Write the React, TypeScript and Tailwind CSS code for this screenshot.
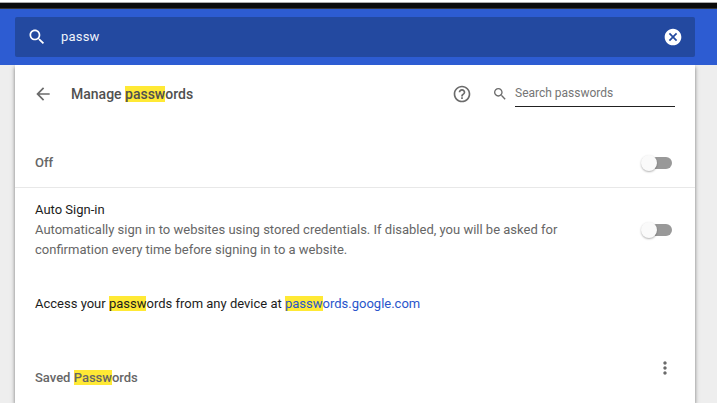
import type { ReactNode } from "react";

function Mark({ children }: { children: ReactNode }) {
  return <mark className="bg-[#ffe935] text-inherit">{children}</mark>;
}

function SearchIcon({ className }: { className: string }) {
  return (
    <svg viewBox="0 0 24 24" fill="currentColor" className={className}>
      <path d="M15.5 14h-.79l-.28-.27C15.41 12.59 16 11.11 16 9.5 16 5.91 13.09 3 9.5 3S3 5.91 3 9.5 5.91 16 9.5 16c1.61 0 3.09-.59 4.23-1.57l.27.28v.79l5 4.99L20.49 19l-4.99-5zm-6 0C7.01 14 5 11.99 5 9.5S7.01 5 9.5 5 14 7.01 14 9.5 11.99 14 9.5 14z" />
    </svg>
  );
}

function Toggle() {
  return (
    <button className="ml-auto mr-[23px] flex h-3 w-[30px] shrink-0 items-center rounded-full bg-[#999]" aria-label="Toggle">
      <span className="-ml-[1px] h-4 w-4 rounded-full bg-[#fafafa] shadow-[0_1px_2px_rgba(0,0,0,0.3)]" />
    </button>
  );
}

export default function App() {
  return (
    <div className="flex h-[403px] w-[717px] flex-col overflow-hidden bg-[#eeeeee] font-[Roboto,sans-serif] text-[13px] leading-5 text-[#1c1c1c]">
      <div className="h-[9px] shrink-0 border-t-2 border-b border-t-white border-b-[#353535] bg-[#0b0b0b]">
        <div className="h-px bg-[#aaa]" />
      </div>
      <header className="relative z-10 h-14 shrink-0 bg-[#2d5cd2] px-[15px] pt-2 pr-[22px]">
        <div className="flex h-10 items-center rounded-[2px] bg-[#2349a0] pl-3 pr-3 text-white">
          <SearchIcon className="h-5 w-5" />
          <span className="ml-[14px] tracking-[0.2px] text-[#f0f3fa]">passw</span>
          <svg viewBox="0 0 24 24" fill="currentColor" className="ml-auto h-5 w-5">
            <path d="M12 2C6.47 2 2 6.47 2 12s4.47 10 10 10 10-4.47 10-10S17.53 2 12 2zm5 13.59L15.59 17 12 13.41 8.41 17 7 15.59 10.59 12 7 8.41 8.41 7 12 10.59 15.59 7 17 8.41 13.41 12 17 15.59z" />
          </svg>
        </div>
      </header>
      <main className="ml-[15px] flex w-[680px] flex-1 flex-col bg-white shadow-[0_2px_4px_rgba(0,0,0,0.5)]">
        <div className="flex h-[58px] shrink-0 items-center pl-[18px] pr-5 text-[#6b6b6b]">
          <svg viewBox="0 0 24 24" fill="currentColor" className="h-5 w-5">
            <path d="M20 11H7.83l5.59-5.59L12 4l-8 8 8 8 1.41-1.41L7.83 13H20v-2z" />
          </svg>
          <h1 className="ml-[18px] text-sm font-medium text-[#505050]">
            Manage <Mark>passw</Mark>ords
          </h1>
          <svg viewBox="0 0 24 24" fill="currentColor" className="ml-auto h-5 w-5">
            <path d="M11 18h2v-2h-2v2zm1-16C6.48 2 2 6.48 2 12s4.48 10 10 10 10-4.48 10-10S17.52 2 12 2zm0 18c-4.41 0-8-3.59-8-8s3.59-8 8-8 8 3.59 8 8-3.59 8-8 8zm0-14c-2.21 0-4 1.79-4 4h2c0-1.1.9-2 2-2s2 .9 2 2c0 2-3 1.75-3 5h2c0-2.25 3-2.5 3-5 0-2.21-1.79-4-4-4z" />
          </svg>
          <SearchIcon className="ml-5 h-4 w-4" />
          <div className="ml-[7px] h-[25px] w-40 border-b border-[#212121] pt-[3px] text-xs text-[#757575]">Search passwords</div>
        </div>
        <div className="mt-4 flex h-[49px] shrink-0 items-center border-b border-[#e8e8e8] pl-5">
          <span className="font-medium text-[#666]">Off</span>
          <Toggle />
        </div>
        <div className="flex h-[84px] shrink-0 items-center pl-5">
          <div className="w-[540px]">
            <div>Auto Sign-in</div>
            <div className="text-[#666]">
              Automatically sign in to websites using stored credentials. If disabled, you will be asked for confirmation every time before signing in to a website.
            </div>
          </div>
          <Toggle />
        </div>
        <p className="mt-[22px] pl-5">
          Access your <Mark>passw</Mark>ords from any device at{" "}
          <a className="text-[#2955cb]"><Mark>passw</Mark>ords.google.com</a>
        </p>
        <div className="mt-11 flex items-start pl-5 pr-5">
          <h2 className="mt-[10px] font-medium text-[#666]">
            Saved <Mark>Passw</Mark>ords
          </h2>
          <svg viewBox="0 0 24 24" fill="currentColor" className="ml-auto h-5 w-5 text-[#6b6b6b]">
            <path d="M12 8c1.1 0 2-.9 2-2s-.9-2-2-2-2 .9-2 2 .9 2 2 2zm0 2c-1.1 0-2 .9-2 2s.9 2 2 2 2-.9 2-2-.9-2-2-2zm0 6c-1.1 0-2 .9-2 2s.9 2 2 2 2-.9 2-2-.9-2-2-2z" />
          </svg>
        </div>
      </main>
    </div>
  );
}
